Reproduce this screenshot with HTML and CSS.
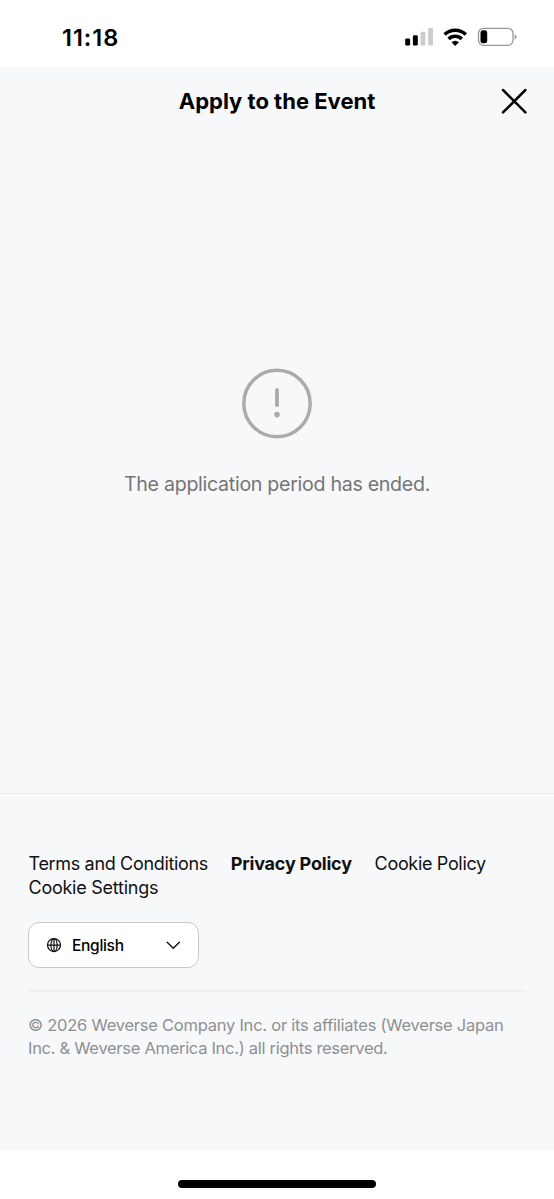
FILE: index.html
```html
<!DOCTYPE html>
<html lang="en">
<head>
<meta charset="utf-8">
<title>Apply to the Event</title>
<link rel="stylesheet" href="styles.css">
</head>
<body>
<div class="status-bar">
  <span class="time">11:18</span>
  <svg class="status-icons" width="114" height="24" viewBox="404 25 114 24" aria-hidden="true">
    <rect x="405.2" y="38.4" width="4.9" height="7.2" rx="1.4"/>
    <rect x="412.9" y="35.3" width="4.9" height="10.3" rx="1.4"/>
    <rect x="420.5" y="31.7" width="4.9" height="13.9" rx="1.4" fill="#ccc"/>
    <rect x="428.1" y="28" width="4.9" height="17.6" rx="1.4" fill="#ccc"/>
    <g fill="none" stroke="#000" stroke-width="3.5">
      <path d="M444.6 34.6a15.4 15.4 0 0 1 21.2 0"/>
      <path d="M448.6 39a9.5 9.5 0 0 1 13.2 0"/>
    </g>
    <path d="M455.2 46l-3.7-3.7a5.2 5.2 0 0 1 7.4 0z"/>
    <rect x="478.5" y="28.3" width="34.5" height="17" rx="5" fill="#fff" stroke="#999" stroke-width="1.3"/>
    <rect x="480.5" y="30.3" width="6.7" height="13" rx="2.4"/>
    <path d="M514.6 34.4q2 .8 2 2.5t-2 2.5z" fill="#999"/>
  </svg>
</div>
<div class="page">
  <header class="header">
    <h1 class="title">Apply to the Event</h1>
    <svg class="close" width="28" height="28" viewBox="0 0 28 28" aria-label="Close"><path d="M3 3l22.4 22.4M25.4 3L3 25.4" fill="none" stroke="#000" stroke-width="2.5" stroke-linecap="round"/></svg>
  </header>
  <main class="notice">
    <svg width="70" height="71" viewBox="0 0 70 71" aria-hidden="true">
      <circle cx="35" cy="35.5" r="33.2" fill="none" stroke="#aaabad" stroke-width="3.5"/>
      <path d="M35 22v15.2" stroke="#aaabad" stroke-width="3.8" stroke-linecap="round"/>
      <circle cx="35" cy="46.6" r="2.8" fill="#aaabad"/>
    </svg>
    <p class="message">The application period has ended.</p>
  </main>
  <footer class="footer">
    <nav class="links">
      <a class="link terms">Terms and Conditions</a>
      <a class="link privacy">Privacy Policy</a>
      <a class="link cookie">Cookie Policy</a>
      <a class="link settings">Cookie Settings</a>
    </nav>
    <div class="language">
      <svg width="16" height="16" viewBox="0 0 16 16" fill="none" stroke="#111" stroke-width="1.25" aria-hidden="true"><circle cx="8" cy="8" r="6.5"/><ellipse cx="8" cy="8" rx="3.1" ry="6.5"/><path d="M8 1.5v13M1.5 8h13"/></svg>
      <span class="language-name">English</span>
      <svg class="chevron" width="16" height="10" viewBox="0 0 16 10" aria-hidden="true"><path d="M2.2 2.2l6.1 6.1 6.1-6.1" fill="none" stroke="#111" stroke-width="1.4" stroke-linecap="round"/></svg>
    </div>
    <p class="copyright"><span class="line line-one">© 2026 Weverse Company Inc. or its affiliates (Weverse Japan</span> <span class="line line-two">Inc. &amp; Weverse America Inc.) all rights reserved.</span></p>
  </footer>
</div>
<div class="home-area"><div class="home-indicator"></div></div>
</body>
</html>
```
FILE: styles.css
```css
* { box-sizing: border-box; }
body {
  margin: 0;
  height: 1199px;
  display: flex;
  flex-direction: column;
  background: #fff;
  color: #111;
  font-family: Inter, "Liberation Sans", sans-serif;
}
.status-bar {
  height: 67px;
  flex: none;
  padding: 25px 36px 0 62px;
  display: flex;
  justify-content: space-between;
  align-items: flex-start;
}
.time { font-size: 23.5px; line-height: 25px; font-weight: 600; letter-spacing: 1px; color: #000; }
.page {
  height: 1083px;
  flex: none;
  background: #f7f8fa;
  display: flex;
  flex-direction: column;
}
.header {
  height: 67px;
  flex: none;
  display: grid;
  grid-template-columns: 54px 1fr 54px;
  align-items: center;
}
.title {
  grid-column: 2;
  margin: 0;
  text-align: center;
  font-size: 22px;
  line-height: 30px;
  font-weight: 700;
  color: #000;
  white-space: nowrap;
}
.close { display: block; }
.notice {
  height: 659px;
  flex: none;
  padding-top: 234px;
  display: flex;
  flex-direction: column;
  align-items: center;
}
.message {
  margin: 31px 0 0;
  font-size: 19.6px;
  line-height: 29px;
  letter-spacing: -0.29px;
  color: #747577;
  white-space: nowrap;
}
.footer {
  flex: 1;
  border-top: 1.5px solid #e8e9eb;
  padding: 58px 28px 0;
}
.links { display: flex; flex-wrap: wrap; column-gap: 22.8px; padding-left: 0.5px; }
.link { font-size: 18px; line-height: 24px; letter-spacing: -0.33px; white-space: nowrap; }
.privacy { font-weight: 700; letter-spacing: -0.2px; }
.settings { letter-spacing: -0.25px; }
.language {
  width: 171px;
  height: 46px;
  margin-top: 22px;
  padding: 0 17px;
  display: flex;
  align-items: center;
  border: 1.5px solid #c7c8ca;
  border-radius: 11px;
  background: #fff;
}
.language-name { margin-left: 10px; padding-top: 1px; font-size: 15.5px; line-height: 20px; font-weight: 500; letter-spacing: -0.3px; color: #000; }
.chevron { margin-left: auto; }
.copyright {
  margin: 22px 0 0;
  padding-top: 22px;
  border-top: 2px solid #eff0f2;
  font-size: 16.5px;
  line-height: 23px;
  color: #8f9092;
}
.line { display: block; white-space: nowrap; letter-spacing: -0.24px; }
.line-two { letter-spacing: -0.29px; }
.home-area {
  flex: 1;
  display: flex;
  justify-content: center;
  padding-top: 30px;
}
.home-indicator { width: 198px; height: 7.5px; border-radius: 4px; background: #000; }
```
